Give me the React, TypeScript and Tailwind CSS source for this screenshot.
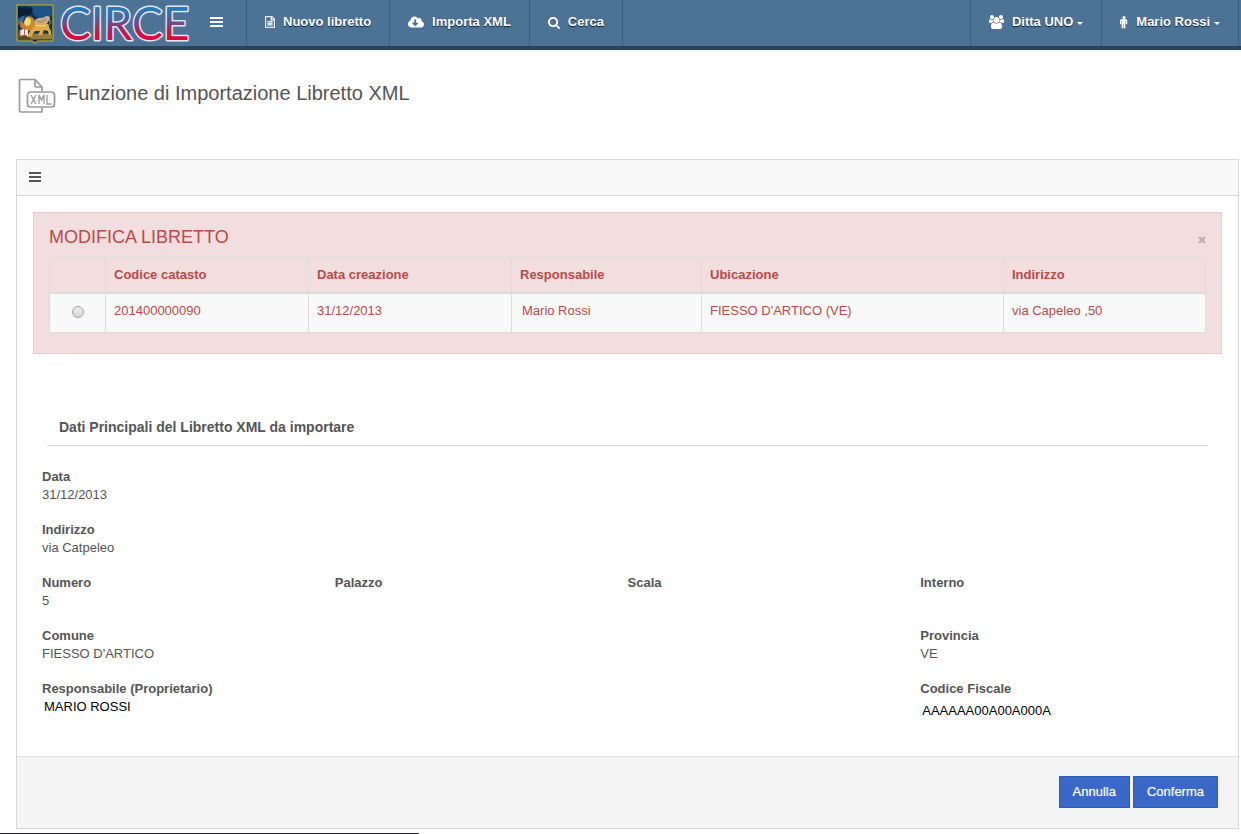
import type { ReactNode } from "react";
import { FaCloudDownloadAlt } from "react-icons/fa";

function Glyph({ w, d, className }: { w: number; d: string; className: string }) {
  return (
    <svg viewBox={"0 0 " + w + " 1792"} className={className} fill="currentColor" aria-hidden="true">
      <path d={d} />
    </svg>
  );
}

const FILE =
  "M1468 380q28 28 48 76t20 88v1152q0 40-28 68t-68 28h-1344q-40 0-68-28t-28-68v-1600q0-40 28-68t68-28h896q40 0 88 20t76 48zm-444-244v376h376q-10-29-22-41l-313-313q-12-12-41-22zm384 1528v-1024h-416q-40 0-68-28t-28-68v-416h-768v1536h1280zm-1024-864q0-14 9-23t23-9h704q14 0 23 9t9 23v64q0 14-9 23t-23 9h-704q-14 0-23-9t-9-23v-64zm736 224q14 0 23 9t9 23v64q0 14-9 23t-23 9h-704q-14 0-23-9t-9-23v-64q0-14 9-23t23-9h704zm0 256q14 0 23 9t9 23v64q0 14-9 23t-23 9h-704q-14 0-23-9t-9-23v-64q0-14 9-23t23-9h704z";
const SEARCH =
  "M1152 832q0-185-131.5-316.5t-316.5-131.5-316.5 131.5-131.5 316.5 131.5 316.5 316.5 131.5 316.5-131.5 131.5-316.5zm512 832q0 52-38 90t-90 38q-54 0-90-38l-343-342q-179 124-399 124-143 0-273.5-55.5t-225-150-150-225-55.5-273.5 55.5-273.5 150-225 225-150 273.5-55.5 273.5 55.5 225 150 150 225 55.5 273.5q0 220-124 399l343 343q37 37 37 90z";
const USERS =
  "M593 896q-162 5-265 128h-134q-82 0-138-40.5t-56-118.5q0-353 124-353 6 0 43.5 21t97.5 42.5 119 21.5q67 0 133-23-5 37-5 66 0 139 81 256zm1071 637q0 120-73 189.5t-194 69.5h-874q-121 0-194-69.5t-73-189.5q0-53 3.5-103.5t14-109 26.5-108.5 43-97.5 62-81 85.5-53.5 111.5-20q10 0 43 21.5t73 48 107 48 135 21.5 135-21.5 107-48 73-48 43-21.5q61 0 111.5 20t85.5 53.5 62 81 43 97.5 26.5 108.5 14 109 3.5 103.5zm-1024-1277q0 106-75 181t-181 75-181-75-75-181 75-181 181-75 181 75 75 181zm704 384q0 159-112.5 271.5t-271.5 112.5-271.5-112.5-112.5-271.5 112.5-271.5 271.5-112.5 271.5 112.5 112.5 271.5zm576 225q0 78-56 118.5t-138 40.5h-134q-103-123-265-128 81-117 81-256 0-29-5-66 66 23 133 23 59 0 119-21.5t97.5-42.5 43.5-21q124 0 124 353zm-128-609q0 106-75 181t-181 75-181-75-75-181 75-181 181-75 181 75 75 181z";
const MALE =
  "M960 640v416q0 40-28 68t-68 28-68-28-28-68v-352h-64v912q0 46-33 79t-79 33-79-33-33-79v-464h-64v464q0 46-33 79t-79 33-79-33-33-79v-912h-64v352q0 40-28 68t-68 28-68-28-28-68v-416q0-80 56-136t136-56h640q80 0 136 56t56 136zm-224-416q0 93-65.500 158.500t-158.500 65.500-158.500-65.500-65.500-158.500 65.500-158.500 158.500-65.500 158.500 65.500 65.500 158.500z";

function Crest() {
  return (
    <svg viewBox="0 0 38 40" className="h-10 w-[38px] shrink-0" role="img" aria-label="Regione del Veneto">
      <path d="M1 1h36v34q0 2-2 2H22l-3 2-3-2H3q-2 0-2-2z" fill="#12304f" stroke="#a99b2c" strokeWidth="1.500" />
      <path d="M13 2h23v9q-10 5-16 2z" fill="#1c5286" />
      <path d="M2 12q4-3 7-1l-2 8-5 2z" fill="#2a6a94" />
      <path d="M2 3q8 3 14 0 2 6-4 8-6 0-10 4z" fill="#0b1d35" />
      <path d="M2 29h34v6q0 1-2 1H4q-2 0-2-1z" fill="#5d4c28" />
      <path d="M15 31q9-3 21 0v4H14z" fill="#94803f" />
      <path d="M18 19q0-4 5-5 5 0 7-2 3 0 4 1-1 6-6 8l-8 1z" fill="#cdb592" />
      <path d="M20 17q6 1 11-3M21 19q6 0 10-3" stroke="#8d7253" strokeWidth="0.700" fill="none" />
      <path d="M17 19q7 1 13 0 3 1 3 4l2 4v4h-2l-1-4-4-1-2 5h-4l2-4h-5l-4 6h-4l3-6z" fill="#e2ac44" />
      <path d="M10 13q5-2 8 2l1 6-3 5-6 1-3-7z" fill="#c98a2e" />
      <path d="M10 14q4-1 5 3l-1 4-4 1-2-3z" fill="#f4d67d" />
      <path d="M5 16q-2 4 0 8l4 2 2-2-3-3z" fill="#d3762e" />
      <path d="M20 21q5 2 10 0" stroke="#f6d885" strokeWidth="1.200" fill="none" />
      <path d="M32 22q4-3 1-7" stroke="#dca94a" fill="none" />
      <path d="M4 26l4-1 4 1v6l-4-1-4 1z" fill="#efe9e2" />
      <path d="M3 26h1.500v6H3zM8 25h0.800v6H8z" fill="#b5473c" />
    </svg>
  );
}

function Logo() {
  return (
    <svg viewBox="0 0 132 42" className="h-[42px] w-[132px] shrink-0 overflow-visible" role="img" aria-label="CIRCE">
      <defs>
        <linearGradient id="circe" gradientUnits="userSpaceOnUse" x1="0" y1="3" x2="0" y2="38">
          <stop offset="0" stopColor="#1f7fc0" />
          <stop offset="0.350" stopColor="#4a5fa0" />
          <stop offset="0.700" stopColor="#c01850" />
          <stop offset="1" stopColor="#f0002c" />
        </linearGradient>
      </defs>
      <text x="0" y="36" fontFamily="Lato" fontWeight="400" fontSize="46" fill="url(#circe)" stroke="#e4e6f0" strokeWidth="3" paintOrder="stroke" strokeLinejoin="round">
        CIRCE
      </text>
    </svg>
  );
}

function Bars({ className }: { className: string }) {
  return (
    <span className={"flex flex-col gap-0.5 " + className} aria-hidden="true">
      <span className="h-0.5 w-full bg-current" />
      <span className="h-0.5 w-full bg-current" />
      <span className="h-0.5 w-full bg-current" />
    </span>
  );
}

function NavLink({ icon, children, caret, side }: { icon: ReactNode; children: ReactNode; caret?: boolean; side: string }) {
  return (
    <a href="#" className={"flex h-full items-center border-[#3c5f7f] pb-0.5 text-white [text-shadow:0_1px_1px_#0f2233] " + side}>
      {icon}
      <span>{children}</span>
      {caret && <span className="ml-1 mt-0.5 border-x-[3px] border-t-[3px] border-x-transparent border-t-white" />}
    </a>
  );
}

function XmlIcon() {
  return (
    <svg viewBox="0 0 40 36" className="h-9 w-10 shrink-0" fill="none" stroke="#9a9a9a" strokeWidth="1.700" aria-hidden="true">
      <path d="M24 30v3q0 1-1 1H3q-1.500 0-1.500-1.500V3Q1.500 1.500 3 1.500H17L24 9v4" />
      <path d="M17 1.500V8q0 1 1 1h6" />
      <rect x="9.500" y="14" width="27" height="15" rx="3" />
      <path d="M13 17l5 9M18 17l-5 9M21 26v-9l2.500 5 2.500-5v9M29 17v9h4.500" strokeWidth="1.300" />
    </svg>
  );
}

function Field({ label, value, className = "", plain }: { label: string; value?: string; className?: string; plain?: string }) {
  return (
    <div className={"min-h-9 " + className}>
      <dt className="font-bold">{label}</dt>
      <dd className={plain ?? ""}>{value}</dd>
    </div>
  );
}

const cell = "border border-[#dddddd] px-2 text-left";

export default function App() {
  return (
    <div className="flex min-h-screen flex-col bg-white font-['Liberation_Sans',Arial,sans-serif] text-[13px] leading-[18px] text-[#555555]">
      <header className="flex h-[50px] items-stretch border-b-4 border-[#2b4359] bg-[#4c7296] pl-4 pr-0.5 font-bold">
        <div className="flex items-start pt-1">
          <Crest />
          <span className="ml-1.5 flex">
            <Logo />
          </span>
        </div>
        <button type="button" aria-label="Menu" className="ml-[18px] flex items-center pb-0.5 pr-[23px] text-white">
          <Bars className="w-[13px]" />
        </button>
        <nav className="flex flex-1 items-stretch">
          <NavLink side="border-l px-[18px]" icon={<Glyph w={1536} d={FILE} className="mr-2 h-3 w-2.5 stroke-current stroke-[60]" />}>Nuovo libretto</NavLink>
          <NavLink side="border-l px-[18px]" icon={<FaCloudDownloadAlt className="mr-2 size-4" />}>Importa XML</NavLink>
          <NavLink side="border-x px-[18px]" icon={<Glyph w={1664} d={SEARCH} className="mr-2 h-[13px] w-3" />}>Cerca</NavLink>
          <div className="ml-auto flex">
            <NavLink caret side="border-l px-[18px]" icon={<Glyph w={1920} d={USERS} className="mr-2 h-[14px] w-[15px]" />}>Ditta UNO</NavLink>
            <NavLink caret side="border-x px-[18px]" icon={<Glyph w={1024} d={MALE} className="mr-2 h-[13px] w-2" />}>Mario Rossi</NavLink>
          </div>
        </nav>
      </header>

      <div className="flex items-start gap-2 px-[18px] pt-7">
        <XmlIcon />
        <h1 className="pt-[3px] text-[20px] leading-6">Funzione di Importazione Libretto XML</h1>
      </div>

      <main className="ml-4 mr-0.5 mt-[45px] border border-[#d8d8d8]">
        <div className="flex h-9 items-center border-b border-[#d8d8d8] bg-[#f9f9f9] px-3 pb-0.5">
          <Bars className="w-3" />
        </div>

        <div className="px-4 pt-4">
          <section className="border border-[#ebccd1] bg-[#f2dede] px-[15px] pb-5 pt-3 text-[#b94a48]">
            <div className="flex items-center justify-between pb-2">
              <h2 className="text-[18px] leading-6">MODIFICA LIBRETTO</h2>
              <button type="button" aria-label="Chiudi" className="pt-1.5 text-[#bfb0b0]">
                <svg viewBox="0 0 8 8" className="size-2" stroke="currentColor" strokeWidth="2.200" aria-hidden="true">
                  <path d="M1 1l6 6M7 1L1 7" />
                </svg>
              </button>
            </div>
            <table className="w-full table-fixed border-collapse">
              <colgroup>
                <col className="w-[56px]" />
                <col className="w-[203px]" />
                <col className="w-[203px]" />
                <col className="w-[190px]" />
                <col className="w-[302px]" />
                <col />
              </colgroup>
              <thead>
                <tr className="h-[35px] border-b-2 border-[#dddddd]">
                  <th className={cell} aria-label="Selezione" />
                  <th className={cell}>Codice catasto</th>
                  <th className={cell}>Data creazione</th>
                  <th className={cell}>Responsabile</th>
                  <th className={cell}>Ubicazione</th>
                  <th className={cell}>Indirizzo</th>
                </tr>
              </thead>
              <tbody>
                <tr className="h-10 bg-[#f9f9f9]">
                  <td className="border border-[#dddddd] pb-0.5">
                    <input
                      type="radio"
                      name="libretto"
                      aria-label="Libretto 201400000090"
                      className="mx-auto block size-3 appearance-none rounded-full border border-[#a5a5a5] bg-linear-to-b from-[#eeeeee] to-[#d4d4d4]"
                    />
                  </td>
                  <td className={cell + " pb-1"}>201400000090</td>
                  <td className={cell + " pb-1"}>31/12/2013</td>
                  <td className="border border-[#dddddd] pb-1 pl-2.5 pr-2 text-left">Mario Rossi</td>
                  <td className={cell + " pb-1"}>FIESSO D'ARTICO (VE)</td>
                  <td className={cell + " pb-1"}>via Capeleo ,50</td>
                </tr>
              </tbody>
            </table>
          </section>
        </div>

        <section className="px-[25px] pb-9 pt-16">
          <h3 className="mx-[5px] border-b border-[#d8d8d8] px-3 pb-[9px] text-[14px] font-bold">
            Dati Principali del Libretto XML da importare
          </h3>
          <dl className="mt-[22px] grid grid-cols-4 gap-y-[17px]">
            <Field className="col-span-4" label="Data" value="31/12/2013" />
            <Field className="col-span-4" label="Indirizzo" value="via Catpeleo" />
            <Field label="Numero" value="5" />
            <Field label="Palazzo" />
            <Field label="Scala" />
            <Field label="Interno" />
            <Field className="col-span-3" label="Comune" value="FIESSO D'ARTICO" />
            <Field label="Provincia" value="VE" />
            <Field className="col-span-3" label="Responsabile (Proprietario)" value="MARIO ROSSI" plain="pl-0.5 text-black" />
            <Field label="Codice Fiscale" value="AAAAAA00A00A000A" plain="pl-0.5 pt-1 text-black" />
          </dl>
        </section>

        <footer className="flex justify-end gap-[3px] border-t border-[#e3e3e3] bg-[#f4f4f4] px-5 pb-5 pt-[19px]">
          <button type="button" className="h-8 border border-[#2f5bb0] bg-[#3a68c8] px-[13px] text-white [text-shadow:0_0_1px_#ffffff80]">Annulla</button>
          <button type="button" className="h-8 border border-[#2f5bb0] bg-[#3a68c8] px-[13px] text-white [text-shadow:0_0_1px_#ffffff80]">Conferma</button>
        </footer>
      </main>
      <div className="mt-auto h-px w-[419px] bg-[#222228]" />
    </div>
  );
}
